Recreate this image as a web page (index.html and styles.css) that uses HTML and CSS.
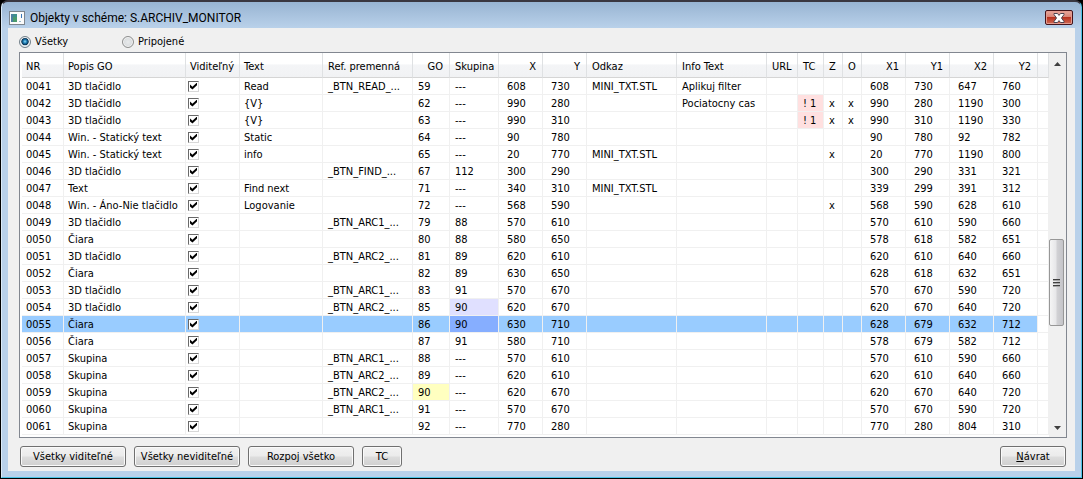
FILE: index.html
```
<!DOCTYPE html>
<html lang="sk">
<head>
<meta charset="utf-8">
<title>Objekty v schéme: S.ARCHIV_MONITOR</title>
<link rel="stylesheet" href="styles.css">
</head>
<body>
<main class="window">
  <header class="titlebar">
    <svg class="app-icon" viewBox="0 0 16 14" aria-hidden="true">
      <rect x="0.5" y="0.5" width="15" height="13" fill="#fbfbfb" stroke="#7d858d"/>
      <rect x="2" y="3" width="6" height="8" fill="#3f8f8c"/>
      <rect x="2" y="3" width="2" height="8" fill="#4d7fa0"/>
      <rect x="4" y="6" width="4" height="5" fill="#4a9a6c"/>
      <rect x="12" y="3" width="1" height="4" fill="#3a78b8"/>
      <rect x="10" y="10" width="2" height="1" fill="#95b5c5"/>
    </svg>
    <h1 class="title">Objekty v schéme: S.ARCHIV_MONITOR</h1>
    <button class="close" type="button" aria-label="Zavrieť">
      <svg viewBox="0 0 12 10" aria-hidden="true"><path d="M1 .5h3.5L6 2.400 7.500 .5H11v1L8.500 5 11 8.500v1H7.500L6 7.600 4.500 9.500H1v-1L3.500 5 1 1.500z" fill="#fff" stroke="#4c4350" stroke-width="1"/></svg>
    </button>
  </header>
  <div class="client">
    <form class="filters">
      <label class="option"><input class="radio" type="radio" name="filter" checked>Všetky</label>
      <label class="option"><input class="radio" type="radio" name="filter">Pripojené</label>
    </form>
    <section class="list">
      <div class="list-body">
        <table class="grid">
          <colgroup><col class="c-nr"><col class="c-desc"><col class="c-vis"><col class="c-text"><col class="c-wide"><col class="c-go"><col class="c-group"><col class="c-num"><col class="c-num"><col class="c-wide"><col class="c-wide"><col class="c-url"><col class="c-tc"><col class="c-flag"><col class="c-flag"><col class="c-num"><col class="c-num"><col class="c-num"><col class="c-num"><col></colgroup>
          <thead>
            <tr><th>NR<th>Popis GO<th>Viditeľný<th>Text<th>Ref. premenná<th class="right">GO<th>Skupina<th class="right">X<th class="right">Y<th>Odkaz<th>Info Text<th>URL<th>TC<th>Z<th>O<th class="right">X1<th class="right">Y1<th class="right">X2<th class="right">Y2<th></tr>
          </thead>
          <tbody>
            <tr><td>0041<td>3D tlačidlo<td><input class="check" type="checkbox" aria-label="Viditeľný 0041" checked><td>Read<td>_BTN_READ_...<td>59<td>---<td>608<td>730<td>MINI_TXT.STL<td>Aplikuj filter<td><td><td><td><td>608<td>730<td>647<td>760<td></tr>
            <tr><td>0042<td>3D tlačidlo<td><input class="check" type="checkbox" aria-label="Viditeľný 0042" checked><td>{V}<td><td>62<td>---<td>990<td>280<td><td>Pociatocny cas<td><td class="alert">! 1<td>x<td>x<td>990<td>280<td>1190<td>300<td></tr>
            <tr><td>0043<td>3D tlačidlo<td><input class="check" type="checkbox" aria-label="Viditeľný 0043" checked><td>{V}<td><td>63<td>---<td>990<td>310<td><td><td><td class="alert">! 1<td>x<td>x<td>990<td>310<td>1190<td>330<td></tr>
            <tr><td>0044<td>Win. - Statický text<td><input class="check" type="checkbox" aria-label="Viditeľný 0044" checked><td>Static<td><td>64<td>---<td>90<td>780<td><td><td><td><td><td><td>90<td>780<td>92<td>782<td></tr>
            <tr><td>0045<td>Win. - Statický text<td><input class="check" type="checkbox" aria-label="Viditeľný 0045" checked><td>info<td><td>65<td>---<td>20<td>770<td>MINI_TXT.STL<td><td><td><td>x<td><td>20<td>770<td>1190<td>800<td></tr>
            <tr><td>0046<td>3D tlačidlo<td><input class="check" type="checkbox" aria-label="Viditeľný 0046" checked><td><td>_BTN_FIND_...<td>67<td>112<td>300<td>290<td><td><td><td><td><td><td>300<td>290<td>331<td>321<td></tr>
            <tr><td>0047<td>Text<td><input class="check" type="checkbox" aria-label="Viditeľný 0047" checked><td>Find next<td><td>71<td>---<td>340<td>310<td>MINI_TXT.STL<td><td><td><td><td><td>339<td>299<td>391<td>312<td></tr>
            <tr><td>0048<td>Win. - Áno-Nie tlačidlo<td><input class="check" type="checkbox" aria-label="Viditeľný 0048" checked><td>Logovanie<td><td>72<td>---<td>568<td>590<td><td><td><td><td>x<td><td>568<td>590<td>628<td>610<td></tr>
            <tr><td>0049<td>3D tlačidlo<td><input class="check" type="checkbox" aria-label="Viditeľný 0049" checked><td><td>_BTN_ARC1_...<td>79<td>88<td>570<td>610<td><td><td><td><td><td><td>570<td>610<td>590<td>660<td></tr>
            <tr><td>0050<td>Čiara<td><input class="check" type="checkbox" aria-label="Viditeľný 0050" checked><td><td><td>80<td>88<td>580<td>650<td><td><td><td><td><td><td>578<td>618<td>582<td>651<td></tr>
            <tr><td>0051<td>3D tlačidlo<td><input class="check" type="checkbox" aria-label="Viditeľný 0051" checked><td><td>_BTN_ARC2_...<td>81<td>89<td>620<td>610<td><td><td><td><td><td><td>620<td>610<td>640<td>660<td></tr>
            <tr><td>0052<td>Čiara<td><input class="check" type="checkbox" aria-label="Viditeľný 0052" checked><td><td><td>82<td>89<td>630<td>650<td><td><td><td><td><td><td>628<td>618<td>632<td>651<td></tr>
            <tr><td>0053<td>3D tlačidlo<td><input class="check" type="checkbox" aria-label="Viditeľný 0053" checked><td><td>_BTN_ARC1_...<td>83<td>91<td>570<td>670<td><td><td><td><td><td><td>570<td>670<td>590<td>720<td></tr>
            <tr><td>0054<td>3D tlačidlo<td><input class="check" type="checkbox" aria-label="Viditeľný 0054" checked><td><td>_BTN_ARC2_...<td>85<td class="member">90<td>620<td>670<td><td><td><td><td><td><td>620<td>670<td>640<td>720<td></tr>
            <tr class="selected"><td>0055<td>Čiara<td><input class="check" type="checkbox" aria-label="Viditeľný 0055" checked><td><td><td>86<td class="member">90<td>630<td>710<td><td><td><td><td><td><td>628<td>679<td>632<td>712<td></tr>
            <tr><td>0056<td>Čiara<td><input class="check" type="checkbox" aria-label="Viditeľný 0056" checked><td><td><td>87<td>91<td>580<td>710<td><td><td><td><td><td><td>578<td>679<td>582<td>712<td></tr>
            <tr><td>0057<td>Skupina<td><input class="check" type="checkbox" aria-label="Viditeľný 0057" checked><td><td>_BTN_ARC1_...<td>88<td>---<td>570<td>610<td><td><td><td><td><td><td>570<td>610<td>590<td>660<td></tr>
            <tr><td>0058<td>Skupina<td><input class="check" type="checkbox" aria-label="Viditeľný 0058" checked><td><td>_BTN_ARC2_...<td>89<td>---<td>620<td>610<td><td><td><td><td><td><td>620<td>610<td>640<td>660<td></tr>
            <tr><td>0059<td>Skupina<td><input class="check" type="checkbox" aria-label="Viditeľný 0059" checked><td><td>_BTN_ARC2_...<td class="owner">90<td>---<td>620<td>670<td><td><td><td><td><td><td>620<td>670<td>640<td>720<td></tr>
            <tr><td>0060<td>Skupina<td><input class="check" type="checkbox" aria-label="Viditeľný 0060" checked><td><td>_BTN_ARC1_...<td>91<td>---<td>570<td>670<td><td><td><td><td><td><td>570<td>670<td>590<td>720<td></tr>
            <tr><td>0061<td>Skupina<td><input class="check" type="checkbox" aria-label="Viditeľný 0061" checked><td><td><td>92<td>---<td>770<td>280<td><td><td><td><td><td><td>770<td>280<td>804<td>310<td></tr>
          </tbody>
        </table>
      </div>
      <div class="scrollbar">
        <button class="arrow" type="button" aria-label="Nahor"><svg viewBox="0 0 7 4" aria-hidden="true"><path d="M0 4L3.5 0 7 4z" fill="#404040"/></svg></button>
        <div class="track">
          <div class="thumb"><span class="grip"></span><span class="grip"></span><span class="grip"></span></div>
        </div>
        <button class="arrow" type="button" aria-label="Nadol"><svg viewBox="0 0 7 4" aria-hidden="true"><path d="M0 0h7L3.5 4z" fill="#404040"/></svg></button>
      </div>
    </section>
    <footer class="actions">
      <button class="btn wide" type="button">Všetky viditeľné</button>
      <button class="btn wide" type="button">Všetky neviditeľné</button>
      <button class="btn wide" type="button">Rozpoj všetko</button>
      <button class="btn small" type="button">TC</button>
      <button class="btn back" type="button"><u>N</u>ávrat</button>
    </footer>
  </div>
</main>
</body>
</html>
```
FILE: styles.css
```
* { box-sizing: border-box; }

body {
  margin: 0;
  background: #000;
  color: #000;
  font: 11px/14px "DejaVu Sans Condensed", "Noto Sans", sans-serif;
}

button, input { font: inherit; color: inherit; margin: 0; }

.window {
  display: flex;
  flex-direction: column;
  min-height: calc(100vh - 1px);
  margin: 0 1px 1px;
  padding: 0 6px 6px;
  border: 1px solid #4cc3e6;
  border-width: 2px 1px 1px;
  border-top-color: #3a3740;
  border-left-color: #dcebf8;
  border-radius: 7px 7px 0 0;
  background: linear-gradient(#98b4d2, #b9d1ea 26px);
}

.titlebar {
  display: flex;
  align-items: center;
  gap: 5px;
  height: 26px;
  padding: 5px 2px 0 1px;
}

.app-icon { width: 16px; height: 14px; }

.title {
  flex: 1;
  margin: 0;
  font: 12px/18px Roboto, "Noto Sans", sans-serif;
}

.close {
  display: flex;
  align-items: center;
  justify-content: center;
  width: 28px;
  height: 15px;
  padding: 0;
  border: 1px solid #44131a;
  border-radius: 2px;
  background: linear-gradient(#e8a79b, #d98375 48%, #b9321f 50%, #cf6a55);
  box-shadow: inset 0 0 0 1px #e39c90;
}

.close svg { width: 12px; height: 10px; flex: none; }

.client {
  flex: 1;
  padding: 4px 8px;
  background: #f0f0f0;
}

.filters { display: flex; gap: 54px; padding: 1px 3px; }

.option { display: flex; align-items: center; gap: 4px; height: 18px; }

.radio {
  appearance: none;
  width: 12px;
  height: 12px;
  border: 1px solid #8e8f8f;
  border-radius: 50%;
  background: radial-gradient(#e8eaeb, #cfd3d6);
  box-shadow: inset 0 0 0 1px #f4f4f4;
}

.radio:checked {
  border-color: #72808a;
  background: radial-gradient(circle at 50% 45%, #8fdcf5 0, #1b78b0 25%, #0d3452 45%, #d4dfe6 55%);
}

.list {
  display: flex;
  margin-left: 3px;
  border: 1px solid #828790;
  background: #fff;
}

.list-body { flex: 1; min-width: 0; padding: 0 0 2px 2px; overflow: hidden; }

.grid { width: 100%; table-layout: fixed; border-collapse: separate; border-spacing: 0; }

.c-nr { width: 42px; }
.c-desc { width: 122px; }
.c-vis { width: 54px; }
.c-text { width: 83px; }
.c-wide { width: 90px; }
.c-go { width: 37px; }
.c-group { width: 49px; }
.c-num { width: 44px; }
.c-url { width: 31px; }
.c-tc { width: 26px; }
.c-flag { width: 19px; }

th, td {
  padding: 2px 0 0 5px;
  border-right: 1px solid #f0f0f0;
  overflow: hidden;
  white-space: nowrap;
  text-align: left;
  font-weight: normal;
}

th {
  height: 25px;
  padding-top: 3px;
  border-right-color: #dfe1e3;
  border-bottom: 1px solid #d5d5d5;
  background: linear-gradient(#fff 45%, #f4f5f7 50%, #f1f2f4);
}

.right { padding-left: 0; padding-right: 6px; text-align: right; }

td { height: 17px; border-bottom: 1px solid #f0f0f0; }

th:nth-child(-n+4), td:nth-child(-n+4) { padding-left: 4px; }

td:nth-child(8), td:nth-child(9),
td:nth-child(n+16) { padding-left: 8px; }

td:nth-child(3) { padding: 0 0 0 2px; }

.alert { background: #ffe0e0; }
.member { background: #e0e0ff; }
.owner { background: #ffffc0; }
.selected td:not(:last-child) { background: #99ccff; }
.selected .member:not(:last-child) { background: #86aeff; }

.check {
  display: grid;
  appearance: none;
  width: 11px;
  height: 11px;
  border: 1px solid #d8d8d8;
  border-top-color: #696969;
  border-left-color: #696969;
  background: #fff;
}

.check:checked::after {
  content: "";
  margin: 1px;
  background: #000;
  clip-path: polygon(0 30%, 35% 60%, 100% 0, 100% 40%, 35% 100%, 0 70%);
}

.scrollbar { display: flex; flex-direction: column; width: 17px; background: #f0f0f0; }

.arrow { height: 20px; padding: 0; border: 0; background: none; line-height: 4px; }
.arrow svg { width: 7px; height: 4px; }

.track { flex: 1; display: flex; flex-direction: column; }
.track::before { content: ""; flex: 168; }
.track::after { content: ""; flex: 92; }

.thumb {
  flex: 86;
  display: flex;
  flex-direction: column;
  align-items: center;
  justify-content: center;
  gap: 1px;
  margin-right: 2px;
  border: 1px solid #979797;
  border-radius: 2px;
  background: linear-gradient(90deg, #f5f5f5, #e6e6e8 48%, #d2d2d5 52%, #c4c4c8);
}

.grip { width: 7px; height: 2px; border-top: 1px solid #404040; background: #a8a8a8; }

.actions { display: flex; gap: 8px; padding: 8px 1px 0 4px; }

.btn {
  height: 21px;
  padding: 1px 0 0;
  border: 1px solid #707070;
  border-radius: 3px;
  background: linear-gradient(#f2f2f2, #ebebeb 48%, #dddddd 52%, #cfcfcf);
  box-shadow: inset 0 0 0 1px #fafafa;
}

.wide { width: 106px; }
.small { width: 40px; }
.back { width: 66px; margin-left: auto; }
```
